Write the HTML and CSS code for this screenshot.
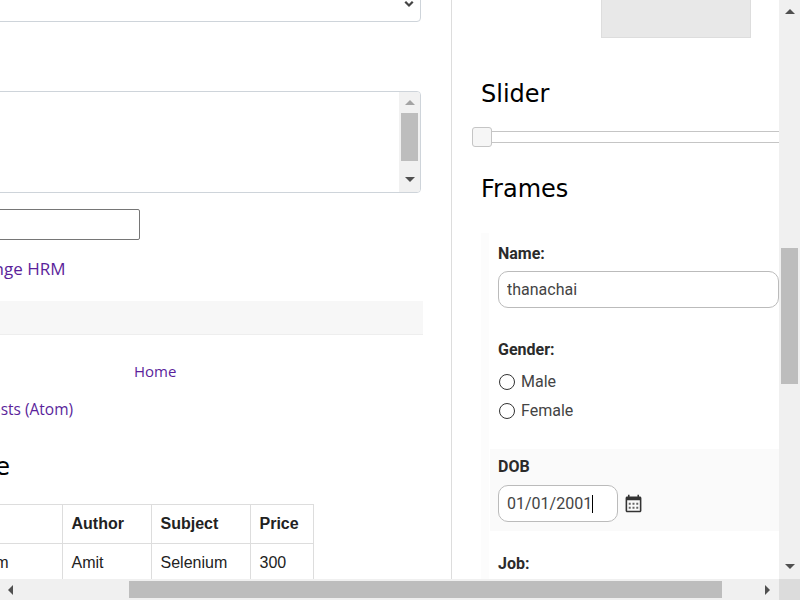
FILE: index.html
```html
<!DOCTYPE html>
<html lang="en">
<head>
    <meta charset="UTF-8">
    <meta name="viewport" content="width=device-width, initial-scale=1.0">
    <title>Automation Testing Practice</title>
    <link rel="stylesheet" href="styles.css">
</head>
<body>
    <div class="window">
        <div class="viewport">
            <div class="main-col">
                <div class="main-inner">
                    <div class="select-box">
                        <svg class="chevron" width="16" height="12" viewBox="0 0 16 16"><path d="M3 5l5 5 5-5" fill="none" stroke="#444" stroke-width="3"/></svg>
                    </div>
                    <div class="textarea-box">
                        <div class="mini-scroll">
                            <span class="arrow arrow-up arrow-off"></span>
                            <span class="mini-thumb"></span>
                            <span class="arrow arrow-down"></span>
                        </div>
                    </div>
                    <input class="plain-input" type="text">
                    <a class="hrm-link" href="#">Orange HRM</a>
                    <div class="footer-band"></div>
                    <a class="home-link" href="#">Home</a>
                    <a class="atom-link" href="#">Posts (Atom)</a>
                    <h2 class="table-title">Web Table</h2>
                    <table class="book-table">
                        <tr>
                            <th class="col-name">BookName</th>
                            <th class="col-author">Author</th>
                            <th class="col-subject">Subject</th>
                            <th class="col-price">Price</th>
                        </tr>
                        <tr>
                            <td>Learn Selenium</td>
                            <td>Amit</td>
                            <td>Selenium</td>
                            <td>300</td>
                        </tr>
                    </table>
                </div>
            </div>

            <div class="side-col">
                <div class="grey-box"></div>
                <h2 class="side-title slider-title">Slider</h2>
                <div class="slider">
                    <span class="slider-handle"></span>
                </div>
                <h2 class="side-title frames-title">Frames</h2>

                <!-- frame -->
                <div class="frame">
                    <div class="frame-inner">
                        <label class="field-label">Name:</label>
                        <input class="name-input" type="text" value="thanachai">
                        <label class="field-label gender-label">Gender:</label>
                        <div class="radios">
                            <label class="radio-row"><input type="radio" name="gender"> Male</label>
                            <label class="radio-row"><input type="radio" name="gender"> Female</label>
                        </div>
                        <div class="dob-band">
                            <label class="field-label">DOB</label>
                            <div class="dob-row">
                                <div class="dob-input">01/01/2001<span class="caret"></span></div>
                                <svg class="calendar" width="19" height="19" viewBox="0 0 24 24">
                                    <path d="M20 3h-1V1h-2v2H7V1H5v2H4c-1.100 0-2 .9-2 2v16c0 1.100.9 2 2 2h16c1.100 0 2-.9 2-2V5c0-1.100-.9-2-2-2zm0 18H4V8h16v13z" fill="#333"/>
                                    <path d="M6 11h2.500v2.500H6zM10.750 11h2.500v2.500h-2.500zM15.500 11H18v2.500h-2.500zM6 16h2.500v2.500H6zM10.750 16h2.500v2.500h-2.500zM15.500 16H18v2.500h-2.500z" fill="#666"/>
                                </svg>
                            </div>
                        </div>
                        <label class="field-label job-label">Job:</label>
                    </div>
                </div>
            </div>
        </div>

        <div class="vbar">
            <span class="arrow arrow-up"></span>
            <span class="vbar-thumb"></span>
            <span class="arrow arrow-down"></span>
        </div>
        <div class="hbar">
            <span class="arrow arrow-left"></span>
            <span class="hbar-thumb"></span>
            <span class="arrow arrow-right"></span>
        </div>
        <div class="corner"></div>
    </div>
</body>
</html>
```

FILE: styles.css
```css
html, body {
    margin: 0;
    padding: 0;
    overflow: hidden;
}

body {
    font-family: "Open Sans", Arial, sans-serif;
    background-color: white;
    color: #222;
}

.window {
    width: 800px;
    height: 600px;
    display: grid;
    grid-template-columns: 779px 21px;
    grid-template-rows: 579px 21px;
}

.viewport {
    display: flex;
    overflow: hidden;
}

/* left column, scrolled sideways so its left part is cut off */
.main-col {
    width: 451px;
    flex: none;
    overflow: hidden;
    border-right: 1px solid #ddd;
}

.main-inner {
    margin-left: -130px;
    margin-top: -16px;
    width: 551px;
}

.main-inner a {
    display: block;
    color: #5b1f9b;
    text-decoration: none;
    white-space: nowrap;
}

.select-box {
    height: 38px;
    box-sizing: border-box;
    border: 1px solid #ced4da;
    border-radius: 4px;
    display: flex;
    align-items: center;
    justify-content: flex-end;
    padding: 2px 3px 0 0;
}

.textarea-box {
    height: 102px;
    box-sizing: border-box;
    margin-top: 69px;
    border: 1px solid #ced4da;
    border-radius: 4px;
    display: flex;
    justify-content: flex-end;
    overflow: hidden;
}

.mini-scroll {
    width: 21px;
    background-color: #f1f1f1;
    display: flex;
    flex-direction: column;
    align-items: center;
}

.mini-thumb {
    width: 17px;
    height: 48px;
    margin-top: 8px;
    background-color: #bdbdbd;
}

.mini-scroll .arrow-up {
    margin-top: 8px;
}

.mini-scroll .arrow-down {
    margin-top: 16px;
}

.plain-input {
    display: block;
    width: 270px;
    height: 31px;
    box-sizing: border-box;
    margin: 16px 0 0 0;
    border: 1px solid #767676;
    border-radius: 2px;
}

.hrm-link {
    margin-top: 17px;
    margin-left: 94px;
    font-size: 17px;
    line-height: 24px;
}

.footer-band {
    width: 553px;
    height: 33px;
    margin-top: 20px;
    background-color: #f7f7f7;
    border-bottom: 1px solid #eee;
}

.home-link {
    margin-top: 26px;
    margin-left: 264px;
    font-size: 15px;
    line-height: 20px;
}

.atom-link {
    margin-top: 18px;
    margin-left: 112px;
    font-size: 15.5px;
    line-height: 20px;
}

.table-title {
    margin: 33px 0 0 18px;
    font-family: "DejaVu Sans", sans-serif;
    font-size: 24px;
    font-weight: normal;
    line-height: 30px;
    color: black;
    white-space: nowrap;
}

.book-table {
    margin: 22px 0 0 17px;
    border-collapse: collapse;
    font-family: "Liberation Sans", Arial, sans-serif;
    font-size: 16px;
    color: #222;
}

.book-table th,
.book-table td {
    border: 1px solid #ddd;
    padding: 0 8px 0 8.5px;
    height: 39px;
    box-sizing: border-box;
    text-align: left;
    white-space: nowrap;
}

.col-name { width: 175px; }
.col-author { width: 89px; }
.col-subject { width: 99px; }
.col-price { width: 63px; }

/* right column */
.side-col {
    flex: 1;
    min-width: 0;
    overflow: hidden;
}

.grey-box {
    width: 150px;
    height: 38px;
    box-sizing: border-box;
    margin-left: 149px;
    background-color: #e8e8e8;
    border: 1px solid #ddd;
    border-top: none;
}

.side-title {
    margin: 0;
    margin-left: 29px;
    font-family: "DejaVu Sans", sans-serif;
    font-size: 24px;
    font-weight: normal;
    line-height: 30px;
    color: black;
}

.slider-title {
    margin-top: 41px;
}

.frames-title {
    margin-top: 31px;
}

.slider {
    position: relative;
    height: 12px;
    box-sizing: border-box;
    margin: 22px -20px 0 30px;
    border: 1px solid #c5c5c5;
    border-right: none;
}

.slider-handle {
    position: absolute;
    left: -11px;
    top: -5px;
    width: 20px;
    height: 20px;
    box-sizing: border-box;
    background-color: #f6f6f6;
    border: 1px solid #c5c5c5;
    border-radius: 3px;
}

.frame {
    margin: 29px 0 0 29px;
    width: 400px;
    padding-left: 8px;
    background-color: #fcfcfc;
}

.frame-inner {
    background-color: white;
    padding: 11px 0 10px 9px;
    font-family: Roboto, Arial, sans-serif;
    font-size: 16px;
    color: #444;
}

.field-label {
    display: block;
    font-weight: bold;
    line-height: 20px;
    color: #2b2b2b;
}

.name-input {
    display: block;
    width: 281px;
    height: 37px;
    box-sizing: border-box;
    margin-top: 7px;
    padding: 0 8px;
    border: 1px solid #bbb;
    border-radius: 10px;
    font: inherit;
    color: inherit;
    outline: none;
}

.gender-label {
    margin-top: 32px;
}

.radios {
    margin-top: 7px;
}

.radio-row {
    display: flex;
    align-items: center;
    gap: 6px;
    height: 29px;
}

.radio-row input {
    appearance: none;
    width: 16px;
    height: 16px;
    box-sizing: border-box;
    margin: 0 0 0 1px;
    border: 1px solid #333;
    border-radius: 50%;
    background-color: white;
}

.dob-band {
    margin: 24px 0 0 -8px;
    padding: 8px 0 9px 8px;
    background-color: #fafafa;
}

.dob-row {
    display: flex;
    align-items: center;
    gap: 6px;
    margin-top: 8px;
}

.dob-input {
    width: 120px;
    height: 37px;
    box-sizing: border-box;
    padding-left: 8px;
    border: 1px solid #bbb;
    border-radius: 10px;
    background-color: white;
    line-height: 35px;
}

.caret {
    display: inline-block;
    width: 1px;
    height: 18px;
    vertical-align: -4px;
    background-color: black;
}

.job-label {
    margin-top: 23px;
}

/* page scrollbars */
.vbar {
    background-color: #f0f0f0;
    display: flex;
    flex-direction: column;
    align-items: center;
}

.vbar-thumb {
    width: 17px;
    height: 136px;
    margin-top: 234px;
    background-color: #bdbdbd;
}

.vbar .arrow-up {
    margin-top: 9px;
}

.vbar .arrow-down {
    margin-top: 180px;
}

.hbar {
    background-color: #f0f0f0;
    display: flex;
    align-items: center;
}

.hbar-thumb {
    width: 593px;
    height: 17px;
    margin-left: 116px;
    background-color: #bdbdbd;
}

.hbar .arrow-left {
    margin-left: 8px;
}

.hbar .arrow-right {
    margin-left: 43px;
}

.corner {
    background-color: #dcdcdc;
}

.arrow {
    flex: none;
    width: 0;
    height: 0;
}

.arrow-up {
    border-left: 5px solid transparent;
    border-right: 5px solid transparent;
    border-bottom: 5px solid #505050;
}

.arrow-down {
    border-left: 5px solid transparent;
    border-right: 5px solid transparent;
    border-top: 5px solid #505050;
}

.arrow-left {
    border-top: 5px solid transparent;
    border-bottom: 5px solid transparent;
    border-right: 5px solid #505050;
}

.arrow-right {
    border-top: 5px solid transparent;
    border-bottom: 5px solid transparent;
    border-left: 5px solid #505050;
}

.arrow-off {
    border-bottom-color: #a3a3a3;
}
```
